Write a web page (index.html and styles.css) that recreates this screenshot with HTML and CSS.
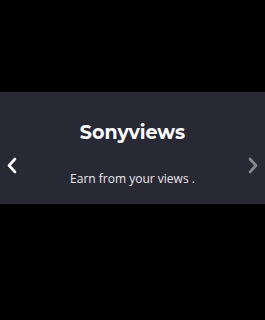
FILE: index.html
```html
<!doctype html>
<html>
	<head>
		<title>Sonyviews</title>
		<meta charset="utf-8">
		<link rel="stylesheet" href="styles.css">
	</head>
	<body>
		<div class="page">
			<div class="slider">
				<span class="arrow prev">
					<svg width="12" height="17" viewBox="0 0 12 17"><path d="M9 2 L3 8.5 L9 15" fill="none" stroke="currentColor" stroke-width="2.6" stroke-linecap="round" stroke-linejoin="round"/></svg>
				</span>
				<div class="slide">
					<h1 class="title">Sonyviews</h1>
					<p class="text">Earn from your views .</p>
				</div>
				<span class="arrow next">
					<svg width="12" height="17" viewBox="0 0 12 17"><path d="M3 2 L9 8.5 L3 15" fill="none" stroke="currentColor" stroke-width="2.6" stroke-linecap="round" stroke-linejoin="round"/></svg>
				</span>
			</div>
		</div>
	</body>
</html>
```

FILE: styles.css
```css
body{
	margin:0px;
	padding:0px;
	background:#000;
	font-family:"Open Sans", "Liberation Sans", sans-serif;
}

.page{
	height:320px;
	display:flex;
	align-items:flex-start;
	padding-top:92px;
	box-sizing:border-box;
}

.slider{
	width:100%;
	height:112px;
	background:#292936;
	display:flex;
	align-items:center;
	justify-content:space-between;
}

.arrow{
	width:24px;
	display:flex;
	justify-content:center;
	margin-top:34px;
}
.prev{
	color:#fff;
}
.next{
	color:#8a8a92;
}

.slide{
	text-align:center;
	color:#fff;
	margin-top:12px;
}
.title{
	margin:0px;
	font-family:"Montserrat", "Lato", "Open Sans", sans-serif;
	font-weight:700;
	font-size:19px;
	line-height:26px;
}
.text{
	margin:24px 0px 0px 0px;
	font-size:12px;
	line-height:18px;
	color:#e8e8ec;
}
```
